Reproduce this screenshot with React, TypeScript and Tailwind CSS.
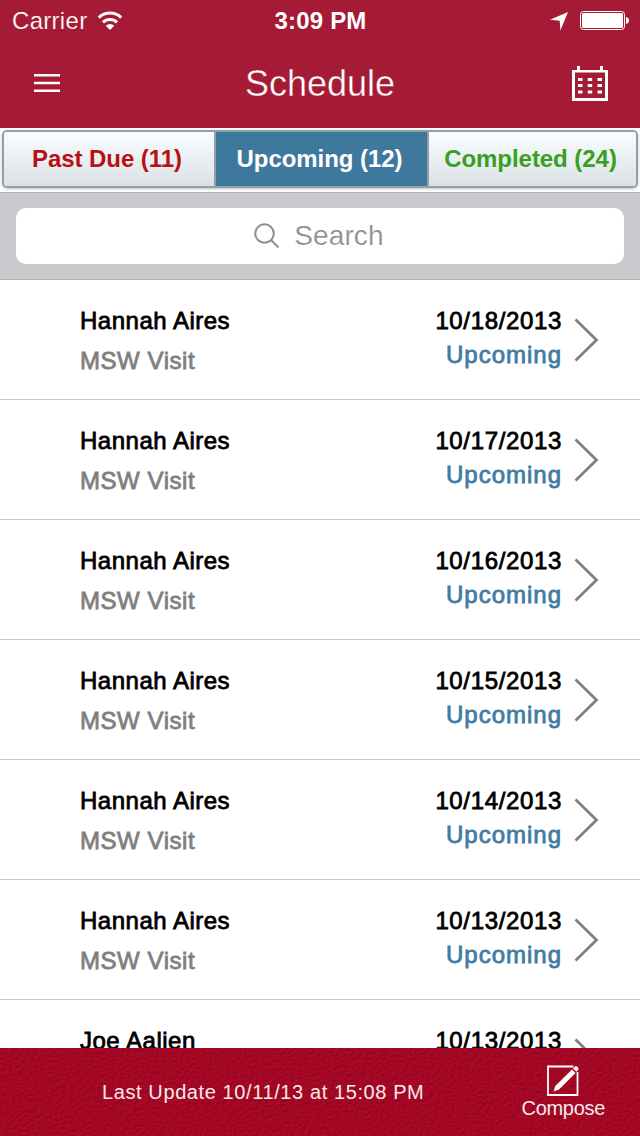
import { useState } from "react";
import clsx from "clsx";

type Visit = {
  name: string;
  date: string;
  type?: string;
  status?: string;
};

const visits: Visit[] = [
  { name: "Hannah Aires", type: "MSW Visit", date: "10/18/2013", status: "Upcoming" },
  { name: "Hannah Aires", type: "MSW Visit", date: "10/17/2013", status: "Upcoming" },
  { name: "Hannah Aires", type: "MSW Visit", date: "10/16/2013", status: "Upcoming" },
  { name: "Hannah Aires", type: "MSW Visit", date: "10/15/2013", status: "Upcoming" },
  { name: "Hannah Aires", type: "MSW Visit", date: "10/14/2013", status: "Upcoming" },
  { name: "Hannah Aires", type: "MSW Visit", date: "10/13/2013", status: "Upcoming" },
  { name: "Joe Aalien", date: "10/13/2013" },
];

const tabs = [
  { label: "Past Due (11)", width: "w-[210px]", color: "text-[#b90f12]" },
  { label: "Upcoming (12)", width: "w-[213px]", color: "text-[#3f789d]" },
  { label: "Completed (24)", width: "flex-1", color: "text-[#37a020]" },
];

function WifiIcon() {
  return (
    <svg width="26" height="20" viewBox="0 0 26 20" fill="none" stroke="#fff" strokeWidth="3">
      <path d="M1.800 6.600a16 16 0 0 1 22.400 0" />
      <path d="M6 11.400a10 10 0 0 1 14 0" />
      <path d="M13 19l-4.200-4.300a6 6 0 0 1 8.400 0z" fill="#fff" stroke="none" />
    </svg>
  );
}

function StatusBar() {
  return (
    <div className="grid h-10 grid-cols-[1fr_auto_1fr] items-center pl-3 pr-[11px] pt-px text-2xl leading-10">
      <div className="flex items-center gap-2.5">
        <span className="tracking-[0.3px] [-webkit-text-stroke:0.2px_#a51a35]">Carrier</span>
        <WifiIcon />
      </div>
      <span className="font-bold tracking-[0.2px]">3:09 PM</span>
      <div className="flex items-center justify-end gap-3">
        <svg width="18" height="19" viewBox="0 0 18 19" fill="#fff">
          <path d="M18 0L10.400 18.500L9.700 8.800L0 7.800z" />
        </svg>
        <svg width="49" height="20" viewBox="0 0 49 20" fill="none">
          <rect x="0.500" y="0.500" width="44" height="18" rx="3" stroke="#fff" />
          <rect x="2" y="2" width="41" height="15" rx="1.500" fill="#fff" />
          <path d="M46 6c4 0.500 4 6.500 0 7z" fill="#fff" />
        </svg>
      </div>
    </div>
  );
}

function CalendarIcon() {
  return (
    <svg width="36" height="36" viewBox="0 0 36 36" fill="#fff">
      <path fillRule="evenodd" d="M0 4h36v31H0zM3 6.500v25.500h30V6.500z" />
      <path d="M5 0h3v5h-3zM28 0h3v5h-3z" />
      {[12, 18, 24.5].map((y) =>
        [6, 15.7, 25.5].map((x) => <rect key={`${x}-${y}`} x={x} y={y} width="4.500" height="3" />)
      )}
    </svg>
  );
}

function NavBar() {
  return (
    <div className="grid h-[88px] grid-cols-[1fr_auto_1fr] items-center pl-[34px] pr-8">
      <button aria-label="Menu" className="-mt-0.5 justify-self-start">
        <svg width="26" height="18" viewBox="0 0 26 18" fill="#fff">
          <path d="M0 0h26v2.500H0zM0 7.700h26v2.500H0zM0 15.500h26v2.500H0z" />
        </svg>
      </button>
      <h1 className="mr-0.5 text-4xl leading-[84px] [-webkit-text-stroke:0.4px_#a51a35]">Schedule</h1>
      <button aria-label="Calendar" className="justify-self-end">
        <CalendarIcon />
      </button>
    </div>
  );
}

function VisitRow({ visit }: { visit: Visit }) {
  return (
    <li className="flex h-[120px] shrink-0 border-b border-[#c8c7cc] pl-20 pr-[41px]">
      <div className="flex-1 pt-[25px] [-webkit-text-stroke:0.8px]">
        <p className="text-2xl leading-8 tracking-[0.5px] text-black">{visit.name}</p>
        {visit.type && <p className="mt-2 text-2xl leading-8 tracking-[0.55px] text-[#808080]">{visit.type}</p>}
      </div>
      <div className="pt-[25px] text-right [-webkit-text-stroke:0.8px]">
        <p className="text-2xl leading-8 tracking-[0.65px] text-black">{visit.date}</p>
        {visit.status && <p className="mt-0.5 text-2xl leading-8 tracking-[1px] text-[#3f7ca3]">{visit.status}</p>}
      </div>
      <svg className="ml-3 mt-[38px]" width="25" height="44" viewBox="0 0 25 44" fill="none" stroke="#808080" strokeWidth="2.800">
        <path d="M1.500 1.500L22.500 22L1.500 42.500" />
      </svg>
    </li>
  );
}

// Fine leather grain under the footer content
function LeatherTexture() {
  return (
    <svg className="absolute inset-0" width="640" height="88" aria-hidden="true">
      <filter id="leather" x="0" y="0" width="100%" height="100%" colorInterpolationFilters="sRGB">
        <feTurbulence type="fractalNoise" baseFrequency="0.28 0.36" numOctaves="2" seed="4" />
        <feColorMatrix values="0 0 0 0 0.635  0 0 0 0 0.03  0 0 0 0 0.14  1 0 0 0 0" />
        <feDiffuseLighting surfaceScale="0.8" lightingColor="#d60a30" diffuseConstant="1">
          <feDistantLight azimuth="235" elevation="49" />
        </feDiffuseLighting>
      </filter>
      <rect width="640" height="88" filter="url(#leather)" opacity="0.5" />
    </svg>
  );
}

function Footer() {
  return (
    <footer className="relative h-[88px] shrink-0 bg-[#a50824] text-[#f8e9ec]">
      <LeatherTexture />
      <div className="relative flex h-full items-center justify-between pl-[102px] pr-[35px]">
        <p className="text-xl tracking-[0.6px]">Last Update 10/11/13 at 15:08 PM</p>
        <button className="flex flex-col items-center pb-0.5">
          <svg width="34" height="33" viewBox="0 0 34 33" fill="none">
            <path d="M27.500 2.500H2v28.500h29.500V8" stroke="#fff" strokeWidth="1.800" />
            <path d="M7.500 27.500l1.800-5.500L26 5.500l3.500 3.500L13 25.500z" fill="#fff" />
            <path d="M27 4.500l2-2q1-0.800 2 0l1.200 1.200q0.800 1 0 2l-1.800 2z" fill="#fff" />
          </svg>
          <span className="text-xl leading-[22px] tracking-[-0.3px]">Compose</span>
        </button>
      </div>
    </footer>
  );
}

export default function App() {
  const [active, setActive] = useState(1);

  return (
    <div className="flex h-[1136px] w-[640px] flex-col overflow-hidden bg-white font-['Liberation_Sans',Arial,sans-serif]">
      <header className="shrink-0 bg-[#a51a35] text-white">
        <StatusBar />
        <NavBar />
      </header>

      <div className="h-16 shrink-0 bg-white px-0.5 pt-0.5">
        <div className="flex h-[58px] overflow-hidden rounded-[5px] border-2 border-[#8fa0aa] shadow-[0_1px_3px_#00000040]">
          {tabs.map((tab, i) => (
            <button
              key={tab.label}
              onClick={() => setActive(i)}
              className={clsx(
                "pr-1 text-2xl font-bold tracking-[-0.05px]",
                tab.width,
                i > 0 && "border-l-2 border-[#8fa0aa]",
                i === active ? "bg-[#3f789d] text-white" : clsx("bg-linear-to-b from-[#fafdff] to-[#dae1e5]", tab.color)
              )}
            >
              {tab.label}
            </button>
          ))}
        </div>
      </div>

      <div className="h-[88px] shrink-0 border-y border-[#b2b2b8] bg-[#c9c9ce] px-4 pt-[15px]">
        <div className="flex h-14 items-center justify-center rounded-[10px] bg-white pr-0.5 text-[#8e8e93]">
          <svg width="26" height="26" viewBox="0 0 26 26" fill="none" stroke="#8e8e93" strokeWidth="2">
            <circle cx="10.500" cy="10.500" r="9.300" />
            <path d="M17 17l7.500 7.500" />
          </svg>
          <span className="ml-3.5 text-[28px] tracking-[0.1px] [-webkit-text-stroke:0.2px_#fff]">Search</span>
        </div>
      </div>

      <ul className="flex min-h-0 flex-1 flex-col overflow-hidden">
        {visits.map((visit, i) => (
          <VisitRow key={i} visit={visit} />
        ))}
      </ul>

      <Footer />
    </div>
  );
}
